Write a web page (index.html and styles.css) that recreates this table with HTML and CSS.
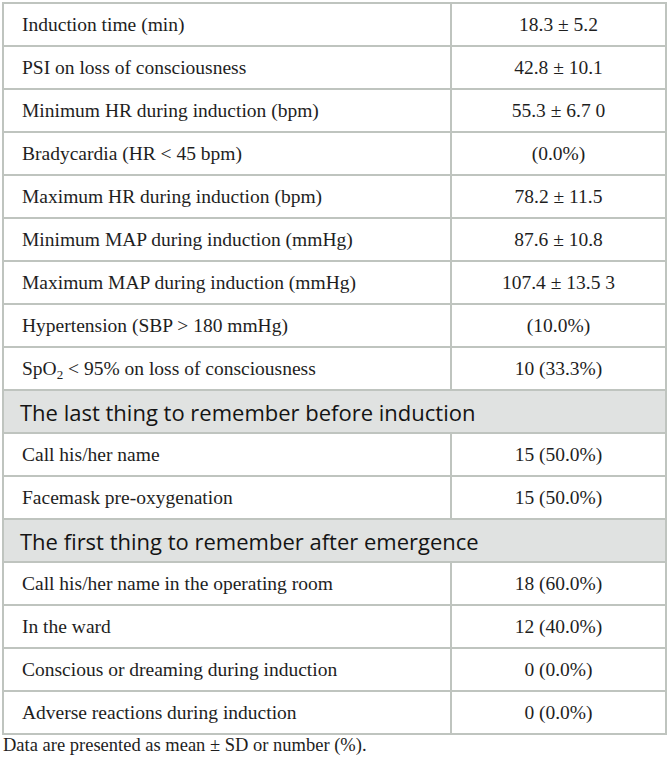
FILE: index.html
```html
<!DOCTYPE html>
<html>
<head>
<meta charset="utf-8">
<link rel="stylesheet" href="styles.css">
</head>
<body>
<table class="tbl">
<tbody>
<tr><td class="lbl">Induction time (min)</td><td class="val">18.3 ± 5.2</td></tr>
<tr><td class="lbl">PSI on loss of consciousness</td><td class="val">42.8 ± 10.1</td></tr>
<tr><td class="lbl">Minimum HR during induction (bpm)</td><td class="val">55.3 ± 6.7 0</td></tr>
<tr><td class="lbl">Bradycardia (HR &lt; 45 bpm)</td><td class="val">(0.0%)</td></tr>
<tr><td class="lbl">Maximum HR during induction (bpm)</td><td class="val">78.2 ± 11.5</td></tr>
<tr><td class="lbl">Minimum MAP during induction (mmHg)</td><td class="val">87.6 ± 10.8</td></tr>
<tr><td class="lbl">Maximum MAP during induction (mmHg)</td><td class="val">107.4 ± 13.5 3</td></tr>
<tr><td class="lbl">Hypertension (SBP &gt; 180 mmHg)</td><td class="val">(10.0%)</td></tr>
<tr><td class="lbl">SpO<sub>2</sub> &lt; 95% on loss of consciousness</td><td class="val">10 (33.3%)</td></tr>
<tr class="sec"><td colspan="2">The last thing to remember before induction</td></tr>
<tr><td class="lbl">Call his/her name</td><td class="val">15 (50.0%)</td></tr>
<tr><td class="lbl">Facemask pre-oxygenation</td><td class="val">15 (50.0%)</td></tr>
<tr class="sec"><td colspan="2">The first thing to remember after emergence</td></tr>
<tr><td class="lbl">Call his/her name in the operating room</td><td class="val">18 (60.0%)</td></tr>
<tr><td class="lbl">In the ward</td><td class="val">12 (40.0%)</td></tr>
<tr><td class="lbl">Conscious or dreaming during induction</td><td class="val">0 (0.0%)</td></tr>
<tr><td class="lbl">Adverse reactions during induction</td><td class="val">0 (0.0%)</td></tr>
</tbody>
</table>
<p class="note">Data are presented as mean ± SD or number (%).</p>
</body>
</html>
```
FILE: styles.css
```css
html, body {
  margin: 0;
  padding: 0;
  background: #ffffff;
}
body {
  padding: 2px 3px 0 2px;
  font-family: "Liberation Serif", "Times New Roman", serif;
  color: #1e1e1e;
}
.tbl {
  border-collapse: collapse;
  width: 665px;
  table-layout: fixed;
}
.tbl td {
  border: 2px solid #bfc4bf;
  height: 41px;
  padding: 0;
  font-size: 19.5px;
  vertical-align: middle;
}
.tbl td.lbl {
  width: 428px;
  padding-left: 18px;
}
.tbl td.val {
  text-align: center;
}
.tbl sub {
  font-size: 13px;
  vertical-align: -4px;
  line-height: 0;
}
.tbl tr.sec td {
  background: #e0e2e1;
  font-family: "Open Sans", "Noto Sans", sans-serif;
  font-size: 22px;
  padding-left: 16px;
  color: #141414;
}
.note {
  margin: 0 0 0 1px;
  font-size: 18.5px;
  color: #1e1e1e;
}
```
